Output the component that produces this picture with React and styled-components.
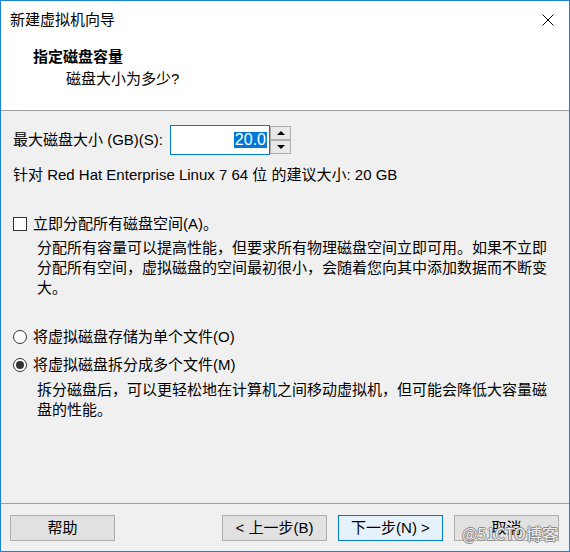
import React from "react";
import styled, { createGlobalStyle } from "styled-components";

const GlobalStyle = createGlobalStyle`
  html, body {
    margin: 0;
    padding: 0;
    background: #ffffff;
  }
  body {
    font-family: "Liberation Sans", "Noto Sans CJK SC", sans-serif;
    font-size: 15px;
    color: #000;
  }
`;

const Window = styled.div`
  position: relative;
  width: 570px;
  height: 552px;
  box-sizing: border-box;
  border: 1px solid #1883d7;
  background: #f0f0f0;
  display: flex;
  flex-direction: column;
  overflow: hidden;
`;

const Header = styled.div`
  height: 110px;
  box-sizing: border-box;
  background: #fff;
  border-bottom: 1px solid #a0a0a0;
`;

const TitleBar = styled.div`
  height: 38px;
  display: flex;
  align-items: center;
  justify-content: space-between;
  padding: 0 15px 0 9px;
  line-height: 20px;
`;

const CloseButton = styled.svg`
  width: 12px;
  height: 12px;
  display: block;
`;

const PageTitle = styled.div`
  margin-top: 8px;
  padding-left: 32px;
  font-weight: bold;
  line-height: 20px;
`;

const PageSubtitle = styled.div`
  margin-top: 2px;
  padding-left: 65px;
  line-height: 20px;
`;

const Body = styled.div`
  flex: 1;
  padding: 0 11px 0 12px;
`;

const SpinRow = styled.div`
  margin-top: 14px;
  height: 30px;
  display: flex;
  align-items: center;
`;

const Label = styled.span`
  line-height: 20px;
  width: 157px;
`;

const SpinInput = styled.div`
  width: 100px;
  height: 30px;
  box-sizing: border-box;
  border: 1px solid #0078d7;
  background: #fff;
  display: flex;
  align-items: center;
  justify-content: flex-end;
  padding-right: 2px;
`;

const Selected = styled.span`
  background: #0078d7;
  color: #fff;
  font-size: 16px;
  line-height: 16px;
  height: 16px;
  padding: 0 1px;
`;

const SpinButtons = styled.div`
  width: 21px;
  height: 30px;
  box-sizing: border-box;
  display: flex;
  flex-direction: column;
  justify-content: space-between;
  padding: 1px 0;
`;

const SpinButton = styled.div`
  height: 14px;
  box-sizing: border-box;
  border: 1px solid #adadad;
  background: #e8e8e8;
  display: flex;
  align-items: center;
  justify-content: center;
`;

const Arrow = styled.span`
  width: 0;
  height: 0;
  border-left: 4px solid transparent;
  border-right: 4px solid transparent;
  ${(p) =>
    p.$down ? "border-top: 4px solid #000;" : "border-bottom: 4px solid #000;"}
`;

const Text = styled.div`
  margin-top: ${(p) => p.$top || 0}px;
  padding-left: ${(p) => p.$indent || 0}px;
  line-height: 20px;
  width: ${(p) => (p.$wrap ? "516px" : "auto")};
`;

const OptionRow = styled.div`
  margin-top: ${(p) => p.$top}px;
  display: flex;
  align-items: center;
  gap: 6px;
  line-height: 20px;
`;

const CheckBox = styled.span`
  width: 14px;
  height: 14px;
  box-sizing: border-box;
  border: 1px solid #333;
  background: #fff;
`;

const Radio = styled.span`
  width: 14px;
  height: 14px;
  box-sizing: border-box;
  border: 1px solid #333;
  border-radius: 50%;
  background: #fff;
  display: flex;
  align-items: center;
  justify-content: center;
  &::after {
    content: "";
    width: 8px;
    height: 8px;
    border-radius: 50%;
    background: ${(p) => (p.$checked ? "#333" : "transparent")};
  }
`;

const Footer = styled.div`
  height: 48px;
  box-sizing: border-box;
  border-top: 1px solid #a0a0a0;
  display: flex;
  align-items: flex-start;
  padding: 11px 10px 0 9px;
  gap: 11px;
`;

const Button = styled.button`
  width: 105px;
  height: 26px;
  box-sizing: border-box;
  border: 1px solid ${(p) => (p.$primary ? "#0078d7" : "#adadad")};
  background: ${(p) => (p.$primary ? "#e5f1fb" : "#e1e1e1")};
  font: inherit;
  line-height: 20px;
  color: #000;
  padding: 0;
  margin-right: ${(p) => (p.$push ? "auto" : "0")};
`;

const Watermark = styled.div`
  position: absolute;
  right: 11px;
  bottom: 8px;
  font-family: "Noto Sans CJK SC", sans-serif;
  font-size: 16px;
  line-height: 20px;
  color: rgba(255, 255, 255, 0.85);
  text-shadow: 1px 0 0 #8a8a8a, -1px 0 0 #8a8a8a, 0 1px 0 #8a8a8a,
    0 -1px 0 #8a8a8a;
  pointer-events: none;
`;

export default function App() {
  return (
    <>
      <GlobalStyle />
      <Window>
        <Header>
          <TitleBar>
            <span>新建虚拟机向导</span>
            <CloseButton viewBox="0 0 12 12">
              <path d="M0.5 0.5 L11.5 11.5 M11.5 0.5 L0.5 11.5" stroke="#000" strokeWidth="1" fill="none" />
            </CloseButton>
          </TitleBar>
          <PageTitle>指定磁盘容量</PageTitle>
          <PageSubtitle>磁盘大小为多少?</PageSubtitle>
        </Header>
        <Body>
          <SpinRow>
            <Label>最大磁盘大小 (GB)(S):</Label>
            <SpinInput>
              <Selected>20.0</Selected>
            </SpinInput>
            <SpinButtons>
              <SpinButton>
                <Arrow />
              </SpinButton>
              <SpinButton>
                <Arrow $down />
              </SpinButton>
            </SpinButtons>
          </SpinRow>
          <Text $top={10}>针对 Red Hat Enterprise Linux 7 64 位 的建议大小: 20 GB</Text>
          <OptionRow $top={29}>
            <CheckBox />
            <span>立即分配所有磁盘空间(A)。</span>
          </OptionRow>
          <Text $top={4} $indent={24} $wrap>
            分配所有容量可以提高性能，但要求所有物理磁盘空间立即可用。如果不立即分配所有空间，虚拟磁盘的空间最初很小，会随着您向其中添加数据而不断变大。
          </Text>
          <OptionRow $top={29}>
            <Radio />
            <span>将虚拟磁盘存储为单个文件(O)</span>
          </OptionRow>
          <OptionRow $top={8}>
            <Radio $checked />
            <span>将虚拟磁盘拆分成多个文件(M)</span>
          </OptionRow>
          <Text $top={5} $indent={24} $wrap>
            拆分磁盘后，可以更轻松地在计算机之间移动虚拟机，但可能会降低大容量磁盘的性能。
          </Text>
        </Body>
        <Footer>
          <Button $push>帮助</Button>
          <Button>&lt; 上一步(B)</Button>
          <Button $primary>下一步(N) &gt;</Button>
          <Button>取消</Button>
        </Footer>
        <Watermark>@51CTO博客</Watermark>
      </Window>
    </>
  );
}
